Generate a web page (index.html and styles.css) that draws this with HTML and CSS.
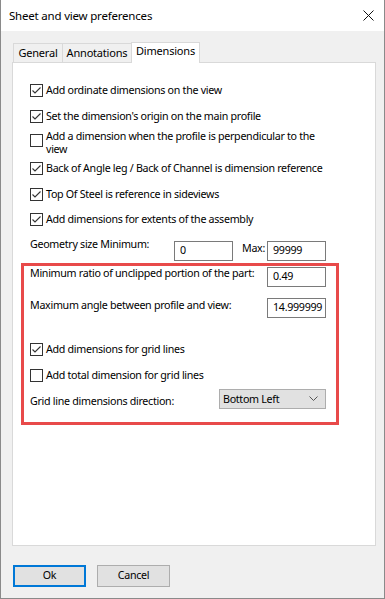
FILE: index.html
```html
<!DOCTYPE html>
<html>
<head>
<meta charset="utf-8">
<link rel="stylesheet" href="styles.css">
</head>
<body>
<div class="window">
  <div class="titlebar">
    <span class="title">Sheet and view preferences</span>
    <svg class="close" width="11" height="11" viewBox="0 0 11 11"><path d="M0.5 0.5 L10.5 10.5 M10.5 0.5 L0.5 10.5" stroke="#111" stroke-width="1" fill="none"/></svg>
  </div>
  <div class="body">
    <div class="tabs">
      <div class="tab tab-general">General</div>
      <div class="tab tab-annot">Annotations</div>
      <div class="tab tab-active">Dimensions</div>
    </div>
    <div class="panel">
      <div class="chk r1"><span class="cb"><svg width="13" height="13" viewBox="0 0 13 13"><rect x="0.5" y="0.5" width="12" height="12" fill="#fff" stroke="#333"/><path d="M2.5 6.5 L5 9 L10.5 3.5" stroke="#333" stroke-width="1.1" fill="none"/></svg></span><span>Add ordinate dimensions on the view</span></div>
      <div class="chk r2"><span class="cb"><svg width="13" height="13" viewBox="0 0 13 13"><rect x="0.5" y="0.5" width="12" height="12" fill="#fff" stroke="#333"/><path d="M2.5 6.5 L5 9 L10.5 3.5" stroke="#333" stroke-width="1.1" fill="none"/></svg></span><span>Set the dimension's origin on the main profile</span></div>
      <div class="chk chk-multi r3"><span class="cb"><svg width="13" height="13" viewBox="0 0 13 13"><rect x="0.5" y="0.5" width="12" height="12" fill="#fff" stroke="#333"/></svg></span><span>Add a dimension when the profile is perpendicular to the<br>view</span></div>
      <div class="chk r4"><span class="cb"><svg width="13" height="13" viewBox="0 0 13 13"><rect x="0.5" y="0.5" width="12" height="12" fill="#fff" stroke="#333"/><path d="M2.5 6.5 L5 9 L10.5 3.5" stroke="#333" stroke-width="1.1" fill="none"/></svg></span><span>Back of Angle leg / Back of Channel is dimension reference</span></div>
      <div class="chk r5"><span class="cb"><svg width="13" height="13" viewBox="0 0 13 13"><rect x="0.5" y="0.5" width="12" height="12" fill="#fff" stroke="#333"/><path d="M2.5 6.5 L5 9 L10.5 3.5" stroke="#333" stroke-width="1.1" fill="none"/></svg></span><span>Top Of Steel is reference in sideviews</span></div>
      <div class="chk r6"><span class="cb"><svg width="13" height="13" viewBox="0 0 13 13"><rect x="0.5" y="0.5" width="12" height="12" fill="#fff" stroke="#333"/><path d="M2.5 6.5 L5 9 L10.5 3.5" stroke="#333" stroke-width="1.1" fill="none"/></svg></span><span>Add dimensions for extents of the assembly</span></div>
      <div class="geom">
        <span class="geom-label">Geometry size Minimum:</span>
        <input class="field" type="text" value="0">
        <span class="max-label">Max:</span>
        <input class="field" type="text" value="99999">
      </div>
      <div class="highlight">
        <div class="frow frow-min">
          <span class="flabel flabel-min">Minimum ratio of unclipped portion of the part:</span>
          <input class="field field-right" type="text" value="0.49">
        </div>
        <div class="frow frow-max">
          <span class="flabel flabel-max">Maximum angle between profile and view:</span>
          <input class="field field-right" type="text" value="14.999999">
        </div>
        <div class="chk g1"><span class="cb"><svg width="13" height="13" viewBox="0 0 13 13"><rect x="0.5" y="0.5" width="12" height="12" fill="#fff" stroke="#333"/><path d="M2.5 6.5 L5 9 L10.5 3.5" stroke="#333" stroke-width="1.1" fill="none"/></svg></span><span>Add dimensions for grid lines</span></div>
        <div class="chk g2"><span class="cb"><svg width="13" height="13" viewBox="0 0 13 13"><rect x="0.5" y="0.5" width="12" height="12" fill="#fff" stroke="#333"/></svg></span><span>Add total dimension for grid lines</span></div>
        <div class="drow">
          <span class="dlabel">Grid line dimensions direction:</span>
          <div class="select"><span>Bottom Left</span><svg width="9" height="6" viewBox="0 0 9 6"><path d="M0.5 0.5 L4.5 4.5 L8.5 0.5" stroke="#555" fill="none"/></svg></div>
        </div>
      </div>
    </div>
    <div class="buttons">
      <div class="btn btn-default">Ok</div>
      <div class="btn">Cancel</div>
    </div>
  </div>
</div>
</body>
</html>
```

FILE: styles.css
```css
* { box-sizing: border-box; }
html, body { margin: 0; padding: 0; background: #fff; }
body {
  font-family: "Noto Sans", "Segoe UI", sans-serif;
  font-size: 10.7px;
  letter-spacing: -0.3px;
  color: #000;
}
.window {
  width: 385px;
  height: 599px;
  border: 1px solid #8a8a8a;
  border-top: none;
  display: flex;
  flex-direction: column;
  background: #f0f0f0;
}
.titlebar {
  height: 31px;
  background: #fff;
  display: flex;
  align-items: center;
  padding-left: 8px;
  padding-right: 10px;
  line-height: 31px;
}
.title { flex: 1; font-size: 11.5px; letter-spacing: -0.2px; }
.close { margin-top: -1px; }
.body {
  padding: 0 11px;
  flex: 1;
}
.tabs {
  margin-top: 11px;
  margin-left: 1px;
  height: 20px;
  display: flex;
  align-items: flex-end;
}
.tab {
  height: 19px;
  border: 1px solid #d9d9d9;
  border-bottom: none;
  background: #f0f0f0;
  text-align: center;
  line-height: 18px;
  font-size: 11px;
  letter-spacing: -0.2px;
}
.tab-general { width: 50px; }
.tab-annot { width: 70px; margin-left: -1px; }
.tab-active {
  width: 69px;
  margin-left: -1px;
  height: 21px;
  margin-bottom: -1px;
  background: #fff;
  line-height: 16px;
  position: relative;
  z-index: 1;
}
.panel {
  width: 364px;
  height: 484px;
  border: 1px solid #d9d9d9;
  background: #fff;
  padding: 17px 0 0 17px;
  display: flex;
  flex-direction: column;
}
.chk {
  display: flex;
  align-items: center;
  height: 20px;
  line-height: 20px;
  white-space: nowrap;
}
.cb {
  width: 13px;
  height: 13px;
  margin-right: 3px;
  flex: none;
  display: flex;
}
.chk-multi {
  height: 26px;
  line-height: 13px;
  align-items: flex-start;
}
.chk-multi .cb { margin-top: 4px; }
.r2 { margin-top: 6px; }
.r3 { margin-top: 4px; }
.r4 { margin-top: 2px; }
.r5 { margin-top: 6px; }
.r6 { margin-top: 5px; }
.geom {
  margin-top: 12px;
  height: 20px;
  display: flex;
  align-items: flex-start;
}
.geom-label {
  width: 144px;
  line-height: 16px;
  margin-top: -5px;
}
.max-label {
  width: 25px;
  margin-left: 9px;
  line-height: 16px;
  margin-top: -1px;
}
.field {
  width: 59px;
  height: 20px;
  border: 1px solid #7a7a7a;
  background: #fff;
  font: inherit;
  letter-spacing: inherit;
  color: #000;
  padding: 0 0 2px 5px;
  margin: 0;
  outline: none;
}
.highlight {
  margin-top: 2px;
  margin-left: -9px;
  width: 318px;
  height: 162px;
  border: 3px solid #e84a4a;
  padding: 1px 10px 0 6px;
  display: flex;
  flex-direction: column;
}
.frow {
  display: flex;
  align-items: flex-start;
  height: 20px;
}
.frow-max { margin-top: 11px; }
.flabel { line-height: 16px; white-space: nowrap; }
.flabel-min { margin-top: -2px; }
.flabel-max { margin-top: -1px; }
.field-right { margin-left: auto; }
.g1 { margin-top: 21px; }
.g2 { margin-top: 6px; }
.drow {
  margin-top: 4px;
  height: 20px;
  display: flex;
  align-items: center;
}
.dlabel { line-height: 16px; margin-top: 4px; }
.select {
  margin-left: auto;
  width: 107px;
  height: 20px;
  background: #e1e1e1;
  border: 1px solid #adadad;
  display: flex;
  align-items: center;
  justify-content: space-between;
  padding: 0 7px 0 3px;
  line-height: 18px;
}
.buttons {
  margin-top: 19px;
  margin-left: 1px;
  display: flex;
  gap: 11px;
}
.btn {
  width: 73px;
  height: 22px;
  background: #e1e1e1;
  border: 1px solid #adadad;
  text-align: center;
  line-height: 19px;
}
.btn-default {
  border: 2px solid #0078d7;
  line-height: 17px;
}
```
